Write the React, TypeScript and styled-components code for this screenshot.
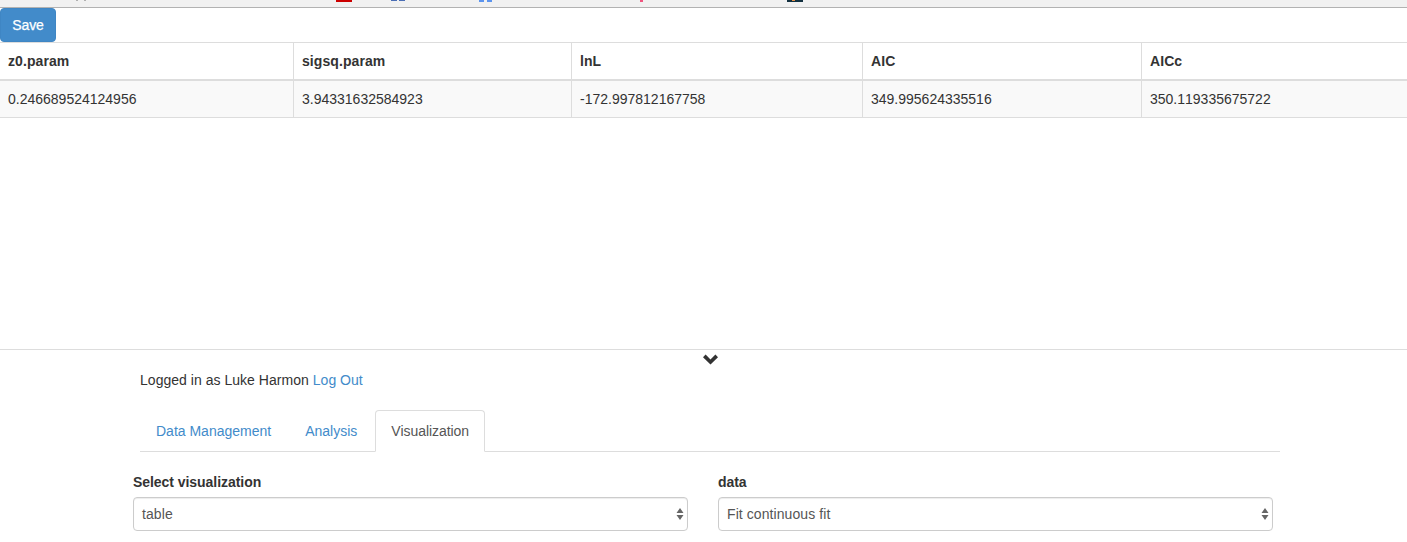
import React from "react";
import styled, { createGlobalStyle } from "styled-components";

const Global = createGlobalStyle`
  html, body { margin: 0; padding: 0; background: #fff; }
  body { font-family: "Liberation Sans", Arial, sans-serif; font-size: 14px; line-height: 20px; color: #333; font-kerning: none; }
  * { box-sizing: border-box; }
`;

const Page = styled.div`
  width: 1407px;
  height: 542px;
  overflow: hidden;
  display: flex;
  flex-direction: column;
`;

const BrowserBar = styled.div`
  position: relative;
  height: 8px;
  flex: none;
  background: #f1f1f1;
  border-bottom: 1px solid #b2b2b2;
`;

const BarGlyph = styled.span<{ $left: number; $w: number; $h: number; $color: string }>`
  position: absolute;
  top: 0;
  left: ${(p) => p.$left}px;
  width: ${(p) => p.$w}px;
  height: ${(p) => p.$h}px;
  background: ${(p) => p.$color};
`;

const SaveButton = styled.button`
  display: block;
  align-self: flex-start;
  flex: none;
  width: 56px;
  height: 34px;
  padding: 0;
  border: 1px solid #3f86c4;
  border-radius: 4px;
  background: #428bca;
  color: #fff;
  font: 14px/20px "Liberation Sans", Arial, sans-serif;
  font-kerning: none;
  letter-spacing: -0.1px;
  -webkit-text-stroke: 0.25px #fff;
`;

const ResultTable = styled.table`
  flex: none;
  width: 1407px;
  table-layout: fixed;
  border-collapse: separate;
  border-spacing: 0;
`;

const Col = styled.col<{ $w: number }>`
  width: ${(p) => p.$w}px;
`;

const HeadCell = styled.th`
  height: 39px;
  padding: 8px;
  text-align: left;
  font-weight: 700;
  letter-spacing: 0.08px;
  vertical-align: middle;
  border-top: 1px solid #ddd;
  border-bottom: 2px solid #ddd;
  border-left: 1px solid #ddd;
  &:first-child { border-left: 0; }
`;

const BodyCell = styled.td`
  height: 37px;
  padding: 8px;
  background: #f9f9f9;
  vertical-align: middle;
  border-bottom: 1px solid #ddd;
  border-left: 1px solid #ddd;
  &:first-child { border-left: 0; }
`;

const Spacer = styled.div`
  flex: none;
  height: 231px;
`;

const Panel = styled.section`
  position: relative;
  flex: 1;
  border-top: 1px solid #ddd;
`;

const Collapse = styled.svg`
  position: absolute;
  left: 703px;
  top: 4px;
  width: 15px;
  height: 11px;
  fill: #333;
`;

const Account = styled.div`
  margin: 20px 0 0 140px;
  height: 20px;
  letter-spacing: 0.03px;
`;

const Link = styled.a`
  color: #428bca;
  text-decoration: none;
`;

const Tabs = styled.ul`
  list-style: none;
  display: flex;
  gap: 2px;
  width: 1140px;
  height: 42px;
  margin: 20px 0 0 140px;
  padding: 0;
  border-bottom: 1px solid #ddd;
`;

const Tab = styled.li<{ $active?: boolean }>`
  height: 42px;
  padding: 10px 15px;
  border: 1px solid ${(p) => (p.$active ? "#ddd" : "transparent")};
  border-bottom-color: ${(p) => (p.$active ? "#fff" : "transparent")};
  border-radius: 4px 4px 0 0;
  background: ${(p) => (p.$active ? "#fff" : "transparent")};
  color: ${(p) => (p.$active ? "#555" : "#428bca")};
  letter-spacing: ${(p) => (p.$active ? "-0.08px" : "0")};
`;

const Fields = styled.div`
  display: flex;
  gap: 30px;
  margin: 20px 0 0 133px;
`;

const Field = styled.div`
  width: 555px;
`;

const Label = styled.label`
  display: block;
  height: 20px;
  margin-bottom: 5px;
  font-weight: 700;
  letter-spacing: -0.05px;
`;

const SelectBox = styled.div`
  position: relative;
  height: 34px;
  padding: 6px 8px;
  border: 1px solid #ccc;
  border-radius: 4px;
  background: #fff;
  color: #555;
  letter-spacing: 0.08px;
  box-shadow: inset 0 1px 1px rgba(0, 0, 0, 0.075);
`;

const Arrows = styled.svg`
  position: absolute;
  right: 3px;
  top: 9px;
  width: 8px;
  height: 14px;
  fill: #666;
`;

const columns = [293, 278, 291, 279, 266];
const headers = ["z0.param", "sigsq.param", "lnL", "AIC", "AICc"];
const values = ["0.246689524124956", "3.94331632584923", "-172.997812167758", "349.995624335516", "350.119335675722"];

const glyphs = [
  { left: 336, w: 16, h: 2, color: "#cc0000" },
  { left: 391, w: 6, h: 1, color: "#4a6eb5" },
  { left: 399, w: 6, h: 1, color: "#4a6eb5" },
  { left: 479, w: 5, h: 2, color: "#5c94ee" },
  { left: 487, w: 5, h: 2, color: "#5c94ee" },
  { left: 640, w: 3, h: 2, color: "#f0557f" },
  { left: 787, w: 16, h: 2, color: "#12303f" },
  { left: 792, w: 3, h: 1, color: "#e8944a" },
  { left: 76, w: 2, h: 1, color: "#b0b0b0" },
  { left: 84, w: 2, h: 1, color: "#b0b0b0" },
];

const Select = ({ label, value }: { label: string; value: string }) => (
  <Field>
    <Label>{label}</Label>
    <SelectBox>
      {value}
      <Arrows viewBox="0 0 8 14">
        <path d="M4 1 7.5 6H.5zM4 13 .5 8h7z" />
      </Arrows>
    </SelectBox>
  </Field>
);

export default function App() {
  return (
    <Page>
      <Global />
      <BrowserBar>
        {glyphs.map((g) => (
          <BarGlyph key={g.left} $left={g.left} $w={g.w} $h={g.h} $color={g.color} />
        ))}
      </BrowserBar>
      <SaveButton>Save</SaveButton>
      <ResultTable>
        <colgroup>
          {columns.map((w) => (
            <Col key={w} $w={w} />
          ))}
        </colgroup>
        <thead>
          <tr>
            {headers.map((h) => (
              <HeadCell key={h}>{h}</HeadCell>
            ))}
          </tr>
        </thead>
        <tbody>
          <tr>
            {values.map((v) => (
              <BodyCell key={v}>{v}</BodyCell>
            ))}
          </tr>
        </tbody>
      </ResultTable>
      <Spacer />
      <Panel>
        <Collapse viewBox="0 0 15 11">
          <path d="M0 3.2 2.6.6 7.5 5.4 12.4.6 15 3.2 7.5 10.4z" />
        </Collapse>
        <Account>
          Logged in as Luke Harmon <Link href="#">Log Out</Link>
        </Account>
        <Tabs>
          <Tab>Data Management</Tab>
          <Tab>Analysis</Tab>
          <Tab $active>Visualization</Tab>
        </Tabs>
        <Fields>
          <Select label="Select visualization" value="table" />
          <Select label="data" value="Fit continuous fit" />
        </Fields>
      </Panel>
    </Page>
  );
}
